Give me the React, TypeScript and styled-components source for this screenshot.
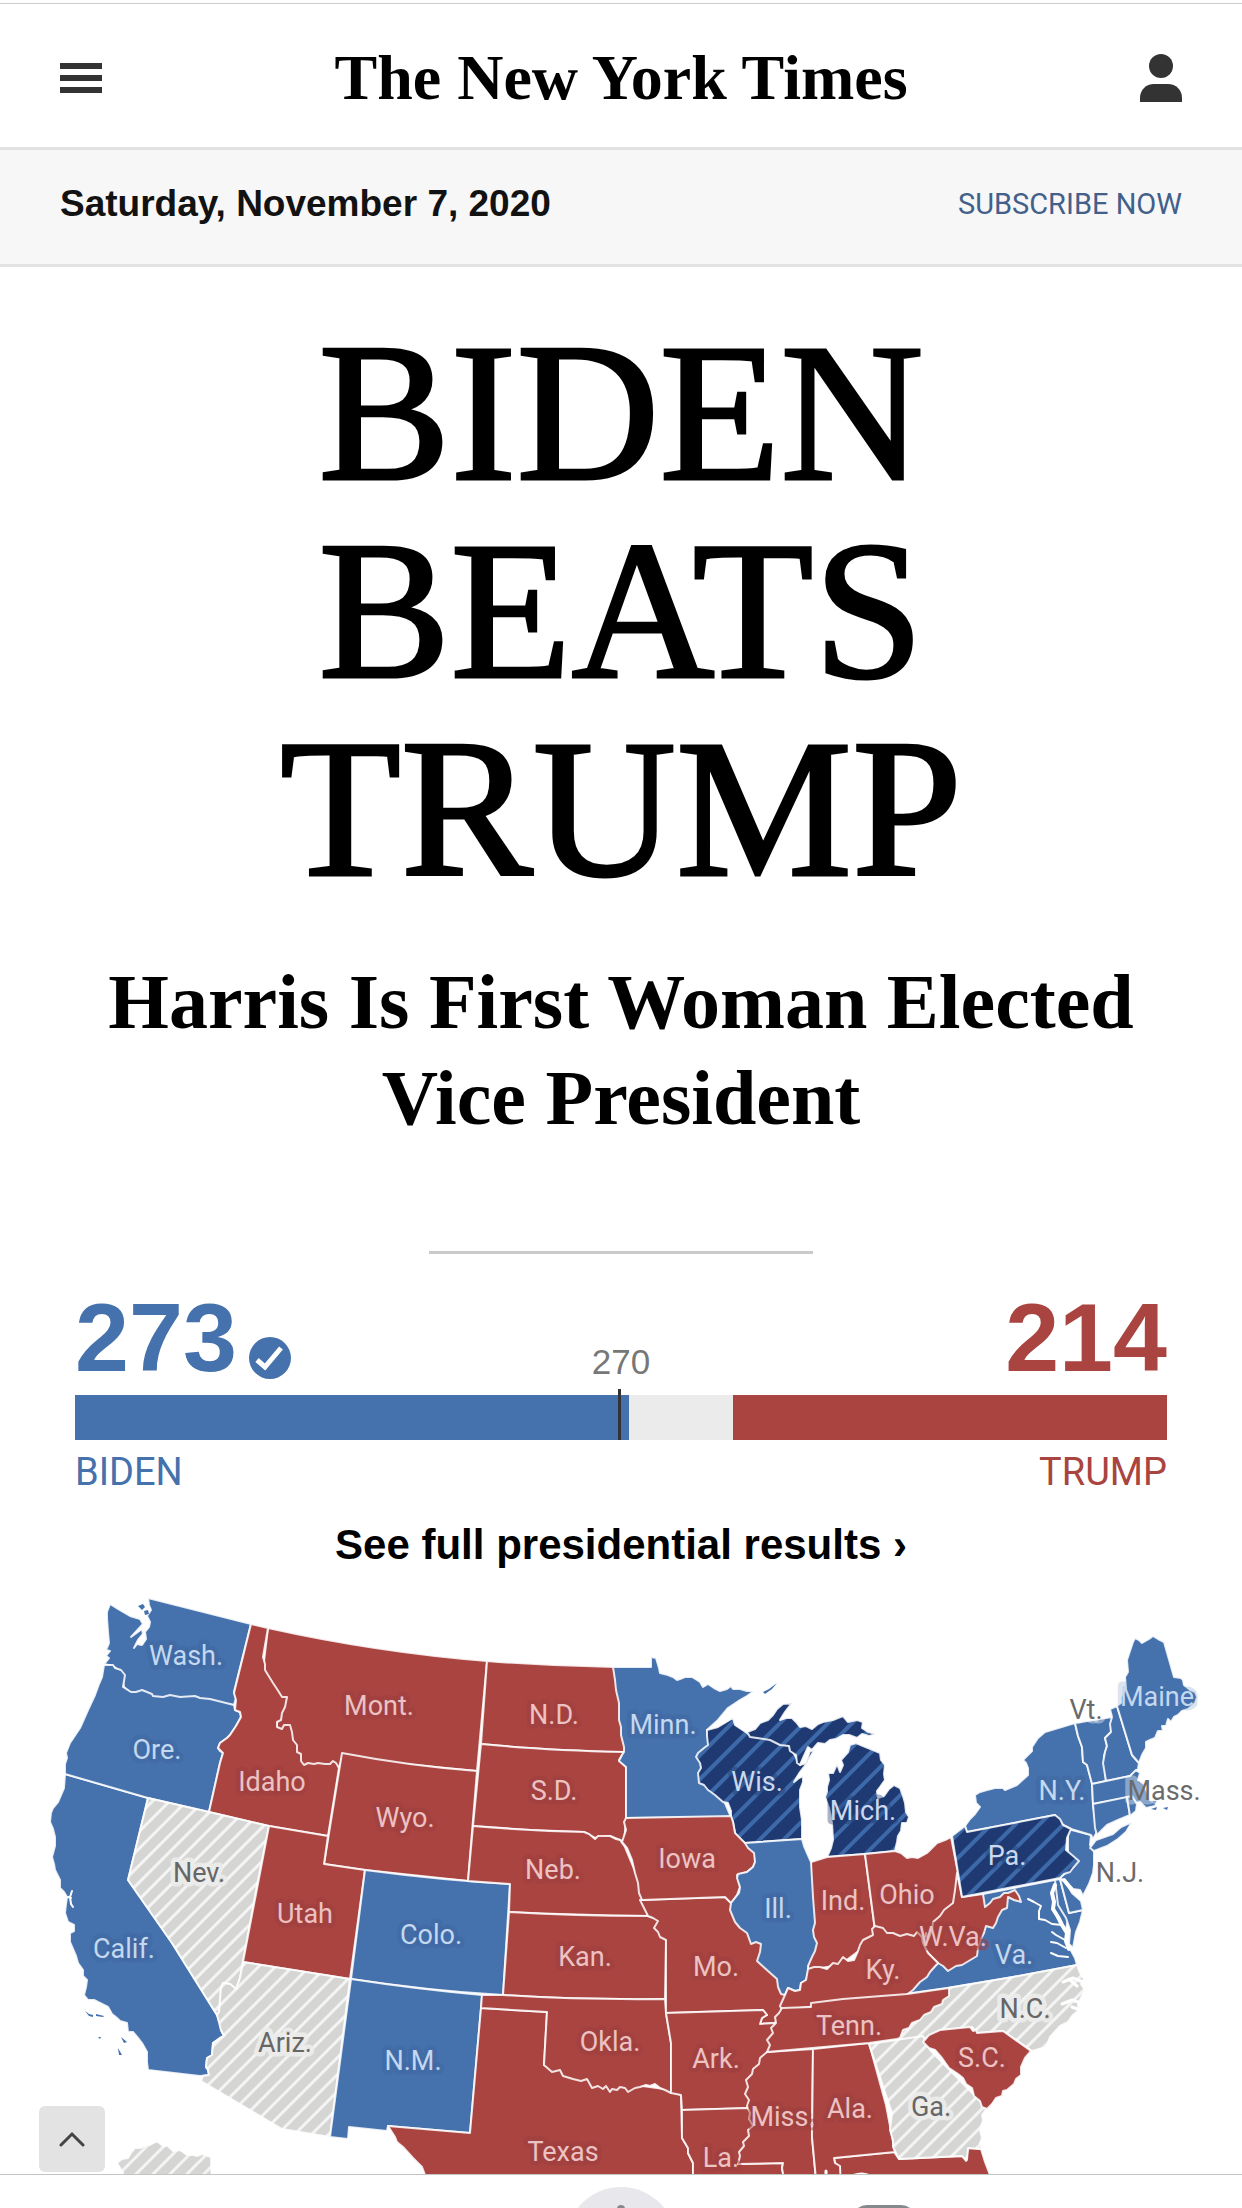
import React from 'react';
import styled, { createGlobalStyle, css } from 'styled-components';

const COLORS = {
  blue: '#4571ad',
  red: '#a94441',
  navy: '#1f3a72',
  grey: '#d5d5d3',
};

const SANS = '"Liberation Sans", Arial, sans-serif';
const SANS_LIGHT = 'Roboto, "Liberation Sans", sans-serif';
const SERIF = '"Liberation Serif", "Times New Roman", serif';

const GlobalStyle = createGlobalStyle`
  * {
    box-sizing: border-box;
  }

  body {
    margin: 0;
    background-color: #ffffff;
    color: #000000;
    font-family: ${SANS};
  }
`;

const Page = styled.div`
  position: relative;
  display: flex;
  flex-direction: column;
  height: 100vh;
  overflow: hidden;
`;

const TopEdge = styled.div`
  flex: none;
  height: 4px;
  border-bottom: 1px solid #cccccc;
`;

const Header = styled.header`
  flex: none;
  display: flex;
  align-items: center;
  justify-content: space-between;
  height: 146px;
  padding: 5px 60px 0;
  border-bottom: 3px solid #e2e2e2;
`;

const IconButton = styled.button`
  display: flex;
  padding: 0;
  border: none;
  background: none;
  color: #333333;
  cursor: pointer;
`;

const Masthead = styled.a`
  font-family: ${SERIF};
  font-size: 64px;
  font-weight: 700;
  line-height: 72px;
  color: #000000;
  text-decoration: none;
  white-space: nowrap;
`;

const DateBar = styled.div`
  flex: none;
  display: flex;
  align-items: center;
  justify-content: space-between;
  height: 117px;
  padding: 0 60px 6px;
  background-color: #f7f7f7;
  border-bottom: 3px solid #e2e2e2;
`;

const Today = styled.time`
  font-size: 37px;
  font-weight: 700;
  line-height: 44px;
  color: #121212;
`;

const SubscribeLink = styled.a`
  font-family: ${SANS_LIGHT};
  font-size: 29px;
  line-height: 36px;
  color: #42608a;
  text-decoration: none;
`;

const Story = styled.section`
  flex: none;
  display: flex;
  flex-direction: column;
  align-items: center;
  padding: 47px 60px 0;
  text-align: center;
  font-family: ${SERIF};
`;

const Headline = styled.h1`
  max-width: 900px;
  margin: 0;
  font-size: 198px;
  font-weight: 400;
  line-height: 198px;
  -webkit-text-stroke: 3px #000000;
`;

const Subhead = styled.h2`
  max-width: 1100px;
  margin: 46px 0 0;
  font-size: 78px;
  font-weight: 700;
  line-height: 96px;
`;

const Rule = styled.hr`
  width: 384px;
  height: 3px;
  margin: 105px 0 0;
  border: none;
  background-color: #cacaca;
`;

const Results = styled.section`
  flex: none;
  padding: 37px 75px 0;
`;

const Totals = styled.div`
  display: grid;
  grid-template-columns: 1fr auto 1fr;
  align-items: end;
`;

const Votes = styled.div<{ $color: string; $end?: boolean }>`
  display: flex;
  align-items: flex-end;
  justify-content: ${({ $end }) => ($end ? 'flex-end' : 'flex-start')};
  gap: 12px;
  font-size: 97px;
  font-weight: 700;
  line-height: 94px;
  color: ${({ $color }) => $color};

  svg {
    margin-bottom: 6px;
  }
`;

const Threshold = styled.div`
  padding-bottom: 3px;
  font-size: 35px;
  line-height: 40px;
  color: #777777;
`;

const Bar = styled.div`
  position: relative;
  display: flex;
  justify-content: space-between;
  height: 45px;
  margin-top: 10px;
  background-color: #ebebeb;

  &::after {
    content: '';
    position: absolute;
    top: -6px;
    bottom: 0;
    left: calc(50% - 3px);
    width: 3px;
    background-color: #333333;
  }
`;

const BarFill = styled.div<{ $color: string }>`
  background-color: ${({ $color }) => $color};
`;

const Names = styled.div`
  display: flex;
  justify-content: space-between;
  margin-top: 10px;
  font-family: ${SANS_LIGHT};
  font-size: 38px;
  line-height: 44px;
`;

const Name = styled.span<{ $color: string }>`
  color: ${({ $color }) => $color};
`;

const ResultsLink = styled.a`
  display: block;
  margin-top: 27px;
  font-size: 42px;
  font-weight: 700;
  line-height: 48px;
  text-align: center;
  color: #000000;
  text-decoration: none;
`;

const MapArea = styled.div`
  flex: 1;
  min-height: 0;
  margin-top: 11px;
  overflow: hidden;

  svg {
    display: block;
    width: 100%;
  }
`;

const StateShape = styled.path`
  stroke: #ffffff;
  stroke-opacity: 0.85;
  stroke-width: 2;
  stroke-linejoin: round;
`;

const labelTones = {
  blue: css`
    fill: #c4d8f0;
    stroke: #3f67a0;
    stroke-opacity: 0.5;
  `,
  coast: css`
    fill: #c4d8f0;
    stroke: #4571ad;
    stroke-opacity: 0.2;
  `,
  red: css`
    fill: #edc2c3;
    stroke: #9c3f3d;
    stroke-opacity: 0.5;
  `,
  navy: css`
    fill: #cbd9ee;
    stroke: #1f3a72;
    stroke-opacity: 0.4;
  `,
  grey: css`
    fill: #666666;
    stroke: #ededed;
    stroke-opacity: 0.9;
  `,
  outside: css`
    fill: #6b6b6b;
    stroke: #ffffff;
    stroke-opacity: 0.4;
  `,
};

type LabelTone = keyof typeof labelTones;

const StateLabel = styled.text<{ $tone: LabelTone }>`
  font-family: ${SANS_LIGHT};
  font-size: 27px;
  text-anchor: middle;
  paint-order: stroke;
  stroke-width: 9;
  stroke-linejoin: round;
  ${({ $tone }) => labelTones[$tone]}
`;

const BackToTop = styled.button`
  position: absolute;
  left: 39px;
  bottom: 36px;
  display: flex;
  align-items: center;
  justify-content: center;
  width: 66px;
  height: 66px;
  padding: 0;
  border: none;
  border-radius: 6px;
  background-color: #e3e3e3;
  cursor: pointer;
`;

const TabBar = styled.nav`
  flex: none;
  display: flex;
  justify-content: space-between;
  height: 34px;
  padding: 12px 40px 0;
  border-top: 1px solid #c4c4c4;
  background-color: #ffffff;
  overflow: hidden;
`;

const TabButton = styled.button<{ $active?: boolean }>`
  display: flex;
  justify-content: center;
  width: 110px;
  height: 110px;
  padding: 18px 0 0;
  border: none;
  border-radius: 50%;
  background-color: ${({ $active }) => ($active ? '#e8e8ec' : 'transparent')};
  color: #85898c;
`;

type Fill = 'blue' | 'red' | 'navyHatch' | 'greyHatch';

const FILLS: Record<Fill, string> = {
  blue: COLORS.blue,
  red: COLORS.red,
  navyHatch: 'url(#navy-hatch)',
  greyHatch: 'url(#grey-hatch)',
};

// Drawn in order: a state with a detailed border comes after the neighbour it lies over.
const states: { id: string; fill: Fill; d: string }[] = [
  {
    id: 'AK',
    fill: 'greyHatch',
    d: 'M117 2163 122 2159 128 2158 131 2153 135 2148 140 2148 147 2145 150 2145 157 2141 163 2146 168 2146 173 2151 180 2150 187 2155 193 2155 197 2156 202 2154 211 2157 212 2190 128 2190 123 2173Z',
  },
  {
    id: 'CA',
    fill: 'blue',
    d: 'M65 1774 64 1788 61 1795 58 1802 53 1808 51 1813 50 1822 53 1829 55 1837 55 1846 52 1857 54 1864 55 1870 60 1880 60 1888 64 1892 67 1897 66 1904 65 1913 68 1922 74 1925 74 1931 70 1933 70 1942 73 1949 76 1956 78 1963 83 1970 83 1976 87 1980 86 1987 84 1995 88 2000 94 2000 100 2003 108 2007 112 2014 117 2018 120 2021 127 2023 128 2032 133 2032 138 2038 142 2043 147 2052 147 2062 148 2070 200 2076 209 2075 208 2070 206 2067 207 2058 212 2055 213 2043 220 2038 224 2036 221 2030 220 2023 217 2015 172 1943 128 1880 148 1798Z',
  },
  {
    id: 'WA',
    fill: 'blue',
    d: 'M110 1604 107 1612 107 1618 108 1632 109 1643 106 1650 110 1651 106 1656 109 1658 104 1664 113 1666 121 1672 124 1687 131 1693 152 1697 234 1705 236 1698 234 1692 251 1624 148 1598 149 1605 151 1610 147 1616 150 1622 149 1627 145 1632 146 1639 142 1645 137 1644 134 1648 138 1640 143 1634 142 1629 131 1637 143 1624 140 1619 130 1616 118 1609Z',
  },
  {
    id: 'OR',
    fill: 'blue',
    d: 'M104 1665 113 1665 115 1668 121 1670 125 1675 123 1687 131 1692 136 1692 142 1690 152 1694 153 1696 163 1697 170 1695 180 1697 195 1696 200 1698 210 1699 234 1705 235 1710 240 1712 241 1717 236 1726 230 1735 227 1738 220 1743 218 1748 220 1751 223 1753 220 1763 209 1812 148 1798 65 1774 65 1764 67 1758 66 1753 70 1743 80 1728 88 1710 95 1695 99 1684 102 1677Z',
  },
  {
    id: 'MT',
    fill: 'red',
    d: 'M268 1628Q376 1652 487 1661L477 1771 342 1758 338 1770 300 1768 276 1727 282 1700 263 1670Z',
  },
  {
    id: 'ID',
    fill: 'red',
    d: 'M251 1624 268 1628 263 1657 265 1664 265 1670 273 1683 277 1689 282 1697 287 1697 285 1707 282 1713 281 1720 277 1722 277 1727 282 1729 284 1725 290 1725 292 1732 293 1740 297 1745 297 1752 301 1754 301 1761 304 1765 308 1763 314 1764 318 1763 325 1764 330 1764 333 1761 336 1763 339 1768 328 1836 269 1826 209 1812 220 1763 223 1753 218 1748 220 1743 227 1738 230 1735 236 1726 241 1717 240 1712 235 1710 236 1700 234 1693Z',
  },
  { id: 'WY', fill: 'red', d: 'M342 1753Q410 1766 477 1771L468 1881 365 1870 324 1864Z' },
  {
    id: 'NV',
    fill: 'greyHatch',
    d: 'M148 1798 209 1812 269 1826 258 1880 243 1962 240 1978 236 1989 230 1984 223 1983 221 1988 220 2000 219 2012 217 2015 172 1943 128 1880Z',
  },
  { id: 'UT', fill: 'red', d: 'M269 1826 328 1836 324 1864 365 1870 350 1979 243 1962Z' },
  { id: 'CO', fill: 'blue', d: 'M365 1870Q440 1880 510 1884L503 1995Q430 1991 351 1979Z' },
  {
    id: 'AZ',
    fill: 'greyHatch',
    d: 'M243 1962 350 1979 330 2137 282 2129 201 2081 203 2076 209 2075 208 2070 206 2067 207 2058 212 2055 213 2043 220 2038 224 2036 221 2030 217 2015 219 2012 220 2000 221 1988 223 1983 230 1984 236 1989 240 1978Z',
  },
  {
    id: 'NM',
    fill: 'blue',
    d: 'M351 1979Q416 1989 482 1995L481 2008 470 2133 388 2126 387 2131 349 2127 348 2139 330 2137Z',
  },
  { id: 'ND', fill: 'red', d: 'M487 1661Q550 1666 615 1667L628 1752 624 1752Q540 1750 481 1744Z' },
  {
    id: 'SD',
    fill: 'red',
    d: 'M481 1744Q540 1750 624 1752L619 1760 626 1767 626 1820 624 1842 620 1840 610 1836 595 1838 584 1832 530 1830 473 1826Z',
  },
  {
    id: 'NE',
    fill: 'red',
    d: 'M473 1826Q530 1831 584 1832L589 1834 595 1839 598 1836 610 1836 616 1839 620 1840 625 1847 645 1895 648 1916Q575 1915 509 1912L510 1884 468 1881Z',
  },
  {
    id: 'KS',
    fill: 'red',
    d: 'M509 1912Q575 1916 648 1916L662 1920 666 1940 665 1999Q580 2000 503 1995Z',
  },
  {
    id: 'TX',
    fill: 'red',
    d: 'M481 2008 547 2012 544 2065 600 2080 671 2090 681 2095 682 2138 688 2148 688 2153 693 2163 693 2190 430 2190 425 2175 422 2167 413 2158 403 2147 397 2142 395 2137 388 2126 470 2133Z',
  },
  {
    id: 'OK',
    fill: 'red',
    d: 'M482 1995 503 1995Q580 2000 665 1999L666 2013 671 2043 671 2093 665 2090 660 2088 655 2084 650 2086 646 2085 640 2087 635 2088 628 2092 625 2088 620 2087 617 2090 612 2089 610 2092 606 2086 603 2089 598 2086 592 2088 587 2079 581 2081 573 2079 563 2076 560 2070 552 2072 544 2065 547 2012 481 2008Z',
  },
  {
    id: 'MN',
    fill: 'blue',
    d: 'M613 1667 651 1667 651 1657 656 1658 659 1668 660 1673 668 1675 673 1677 677 1680 680 1679 685 1677 692 1677 697 1680 700 1682 703 1687 708 1684 714 1688 720 1691 727 1689 731 1686 733 1689 740 1689 747 1691 754 1691 747 1696 740 1700 728 1708 718 1720 707 1730 715 1780 731 1817 626 1818 626 1767 619 1761 622 1755 624 1752 624 1747 621 1735 621 1727 619 1720 619 1703 616 1690 615 1680Z',
  },
  {
    id: 'WI',
    fill: 'navyHatch',
    d: 'M707 1730 718 1727 733 1718 735 1725 747 1733 770 1738 790 1746 800 1765 806 1763 810 1751 814 1750 807 1763 800 1772 794 1782 799 1778 803 1776 803 1782 800 1790 800 1807 802 1820 802 1839 745 1843 739 1839 735 1833 733 1822 731 1817 731 1811 728 1803 723 1802 715 1795 708 1790 704 1785 699 1783 698 1773 701 1768 700 1763 696 1757 698 1753 704 1748 708 1745 707 1736Z',
  },
  {
    id: 'MI-UP',
    fill: 'navyHatch',
    d: 'M747 1732 755 1729 760 1723 768 1720 773 1715 777 1709 783 1704 792 1703 788 1708 785 1712 780 1720 786 1718 792 1718 796 1722 800 1727 806 1726 812 1729 818 1724 823 1722 833 1720 843 1716 848 1722 857 1720 863 1722 862 1728 868 1732 876 1734 869 1736 862 1734 857 1738 849 1735 843 1735 836 1739 830 1740 825 1744 818 1743 812 1750 808 1747 803 1758 800 1765 797 1763 796 1755 790 1751 789 1746 780 1745 770 1740 757 1738 750 1737Z',
  },
  {
    id: 'MI',
    fill: 'navyHatch',
    d: 'M848 1752 850 1745 856 1743 863 1746 873 1750 880 1753 881 1760 885 1765 884 1774 885 1780 880 1787 877 1791 878 1798 884 1796 889 1789 894 1785 900 1788 903 1796 905 1803 906 1812 909 1817 907 1823 902 1823 901 1831 898 1836 897 1842 895 1851 865 1854 827 1857 831 1848 833 1840 832 1823 829 1808 825 1797 827 1792 827 1787 829 1780 828 1773 833 1773 837 1764 840 1772 843 1765 841 1760Z',
  },
  {
    id: 'MO',
    fill: 'red',
    d: 'M640 1900 725 1897 731 1903 760 1940 790 1995 785 2008 775 2023 760 2024 762 2018 767 2015 763 2010 666 2013 666 1940 660 1937 658 1932 654 1928 658 1921 653 1918 648 1916Z',
  },
  {
    id: 'IA',
    fill: 'red',
    d: 'M626 1818 731 1816 733 1822 735 1833 745 1843 751 1848 755 1853 755 1862 753 1867 747 1872 737 1875 740 1887 737 1895 731 1903 725 1897 642 1900 639 1893 638 1883 635 1873 632 1860 627 1848 622 1842 626 1830 624 1822Z',
  },
  {
    id: 'IN',
    fill: 'red',
    d: 'M811 1862 827 1857 865 1854 875 1930 873 1937 860 1950 840 1965 808 1970Z',
  },
  {
    id: 'IL',
    fill: 'blue',
    d: 'M745 1843 802 1839 804 1846 807 1853 811 1862 813 1897 815 1923 813 1930 814 1937 817 1943 815 1951 812 1957 808 1966 808 1973 806 1980 801 1983 800 1990 795 1991 788 1988 785 1995 781 1994 778 1987 777 1979 768 1971 757 1961 760 1952 761 1944 756 1942 751 1944 747 1933 740 1928 735 1922 730 1910 731 1903 735 1898 739 1893 740 1887 737 1878 738 1874 747 1872 753 1867 755 1862 754 1853 748 1848Z',
  },
  {
    id: 'OH',
    fill: 'red',
    d: 'M865 1854 895 1851 901 1853 907 1858 912 1857 918 1858 927 1853 937 1843 945 1840 951 1837 958 1873 955 1900 930 1942 900 1940 875 1930Z',
  },
  {
    id: 'VA',
    fill: 'blue',
    d: 'M938 1963 983 1894 1060 1879 1069 1913 1066 1930 1068 1945 1075 1958 1077 1965 1013 1977 947 1988 905 1994Z',
  },
  {
    id: 'WV',
    fill: 'red',
    d: 'M957 1873 962 1897 983 1894 985 1907 990 1903 993 1899 1000 1897 1004 1893 1008 1893 1015 1890 1019 1896 1021 1902 1014 1900 1008 1897 1007 1908 1002 1910 998 1917 996 1923 993 1928 986 1926 984 1933 981 1939 978 1948 977 1956 972 1959 962 1965 956 1966 948 1971 943 1966 938 1963 928 1953 924 1948 923 1943 926 1933 928 1940 932 1930 933 1922 940 1916 944 1910 953 1903 955 1890Z',
  },
  {
    id: 'KY',
    fill: 'red',
    d: 'M808 1969 814 1967 820 1967 827 1969 833 1963 838 1964 843 1957 848 1961 854 1960 858 1951 860 1945 863 1940 873 1935 872 1929 875 1926 883 1928 887 1933 893 1933 900 1936 907 1934 914 1936 917 1932 922 1937 923 1943 928 1953 938 1963 930 1972 927 1977 920 1982 913 1990 905 1996 782 2010 780 2006 785 1995 788 1988 795 1991 800 1990 801 1983 806 1980Z',
  },
  {
    id: 'AR',
    fill: 'red',
    d: 'M666 2013 763 2010 767 2015 762 2018 760 2024 775 2023 790 2035 765 2060 755 2108 682 2110 681 2095 671 2093 671 2043Z',
  },
  {
    id: 'LA',
    fill: 'red',
    d: 'M682 2110 748 2108 770 2120 738 2164 783 2163 782 2168 786 2190 693 2190 693 2163 688 2153 688 2148 682 2138Z',
  },
  {
    id: 'MS',
    fill: 'red',
    d: 'M767 2052 813 2049 812 2137 817 2190 786 2190 782 2168 783 2163 738 2164 740 2156 739 2152 744 2146 743 2142 749 2136 748 2130 753 2126 749 2119 750 2113 747 2106 749 2100 745 2094 748 2087 746 2080 752 2074 753 2069 759 2064 760 2058Z',
  },
  {
    id: 'FL',
    fill: 'red',
    d: 'M834 2158 894 2152 899 2159 962 2156 966 2161 968 2148 981 2149 985 2162 990 2175 992 2190 840 2190 840 2175 840 2167 835 2163Z',
  },
  {
    id: 'AL',
    fill: 'red',
    d: 'M813 2049 869 2043 886 2105 895 2152 834 2158 835 2163 840 2166 841 2190 817 2190 812 2137Z',
  },
  {
    id: 'NC',
    fill: 'greyHatch',
    d: 'M948 1988 1013 1977 1077 1965 1080 1973 1084 1979 1081 1984 1085 1990 1081 1998 1078 2005 1079 2010 1072 2016 1068 2022 1060 2026 1050 2037 1046 2047 1032 2051 1003 2031 977 2033 972 2027 940 2030 923 2040 897 2039 898 2030 908 2020 930 2005Z',
  },
  {
    id: 'GA',
    fill: 'greyHatch',
    d: 'M869 2044 923 2036 930 2050 987 2108 982 2115 983 2120 980 2130 982 2138 980 2143 982 2149 968 2148 967 2160 962 2156 899 2159 893 2147 893 2140 890 2130 892 2113Z',
  },
  {
    id: 'TN',
    fill: 'red',
    d: 'M782 2008 811 2007 811 2003 843 1999 907 1994 949 1988 949 1996 943 2000 942 2004 934 2007 931 2012 924 2015 920 2020 912 2023 909 2028 903 2030 900 2038 897 2039 869 2043 767 2052 770 2045 767 2040 773 2033 771 2028 776 2023 775 2017 779 2013Z',
  },
  {
    id: 'SC',
    fill: 'red',
    d: 'M923 2042 929 2035 940 2030 970 2027 973 2031 976 2030 977 2033 1003 2031 1031 2051 1025 2058 1021 2067 1021 2075 1016 2079 1014 2084 1007 2090 1003 2091 1002 2096 996 2098 992 2104 987 2109 982 2107 980 2101 974 2096 972 2088 966 2084 963 2078 958 2074 949 2068 942 2058 935 2050 929 2048Z',
  },
  {
    id: 'DELMARVA',
    fill: 'blue',
    d: 'M1055 1880 1060 1879 1069 1913 1083 1910 1080 1922 1076 1932 1073 1948 1069 1944 1070 1930 1066 1918 1058 1905Z',
  },
  { id: 'DE', fill: 'blue', d: 'M1060 1879 1066 1882 1072 1893 1081 1901 1083 1910 1069 1913Z' },
  {
    id: 'NJ',
    fill: 'blue',
    d: 'M1068 1829 1091 1835 1090 1845 1094 1852 1094 1865 1093 1873 1089 1884 1083 1896 1080 1890 1073 1889 1067 1883 1060 1878 1068 1870Z',
  },
  {
    id: 'NY',
    fill: 'blue',
    d: 'M965 1826 970 1819 975 1814 980 1807 976 1803 975 1795 980 1792 987 1790 995 1788 1003 1788 1005 1790 1017 1785 1028 1775 1028 1768 1026 1763 1023 1760 1032 1751 1032 1747 1038 1738 1045 1732 1075 1723 1078 1736 1082 1747 1083 1762 1087 1765 1092 1783 1093 1805 1097 1832 1093 1839 1091 1835 1071 1829 1063 1825 1055 1815 967 1832Z',
  },
  {
    id: 'PA',
    fill: 'navyHatch',
    d: 'M952 1836 965 1826 967 1832 1055 1815 1060 1819 1063 1825 1071 1829 1067 1838 1066 1850 1072 1855 1079 1861 1073 1868 1070 1872 1064 1874 1060 1878 962 1897Z',
  },
  {
    id: 'LI',
    fill: 'blue',
    d: 'M1090 1848 1096 1840 1113 1834 1121 1827 1132 1822 1126 1832 1118 1839 1107 1846 1094 1851Z',
  },
  {
    id: 'VT',
    fill: 'blue',
    d: 'M1075 1723 1112 1717 1111 1732 1105 1738 1107 1746 1104 1756 1106 1781 1092 1784 1087 1765 1083 1762 1082 1747 1078 1736Z',
  },
  {
    id: 'NH',
    fill: 'blue',
    d: 'M1112 1717 1110 1709 1117 1706 1132 1755 1139 1763 1138 1769 1130 1776 1106 1781 1103 1763 1105 1752 1107 1746 1105 1738 1111 1732 1110 1724Z',
  },
  {
    id: 'ME',
    fill: 'blue',
    d: 'M1117 1706 1121 1703 1121 1697 1126 1688 1125 1677 1128 1672 1127 1660 1133 1642 1135 1638 1139 1640 1142 1643 1149 1639 1153 1636 1158 1639 1164 1642 1174 1677 1181 1678 1183 1680 1184 1685 1190 1690 1195 1692 1197 1697 1195 1703 1188 1709 1182 1711 1178 1715 1174 1717 1171 1722 1168 1719 1166 1726 1162 1726 1163 1731 1158 1731 1155 1738 1150 1740 1146 1742 1146 1748 1142 1755 1139 1763 1132 1755Z',
  },
  {
    id: 'MA',
    fill: 'blue',
    d: 'M1092 1784 1130 1776 1136 1770 1140 1773 1138 1780 1144 1784 1147 1792 1150 1800 1158 1800 1155 1806 1146 1808 1140 1802 1136 1803 1131 1797 1093 1804Z',
  },
  { id: 'CT', fill: 'blue', d: 'M1093 1804 1127 1797 1130 1815 1118 1820 1107 1825 1097 1835 1095 1828Z' },
  { id: 'RI', fill: 'blue', d: 'M1127 1797 1132 1796 1137 1804 1136 1811 1130 1816Z' },
];

const islands =
  'M138 1606l5 -2 2 3 -3 3zM144 1611l4 -1 1 4 -4 1zM763 1692l6 -3 8 -6 -5 6 -7 5zM85 2011l4 3 4 1 0 2 -4 -1zM96 2014l8 2 -1 1 -7 -1zM98 2037l3 0 -1 2zM121 2037l6 5 -3 1zM118 2048l4 7 -3 0zM1151 1809l6 -2 -1 3zM1163 1808l5 -1 -1 3z';

const labels: [text: string, x: number, y: number, tone: LabelTone][] = [
  ['Wash.', 186, 1665, 'blue'],
  ['Ore.', 157, 1759, 'blue'],
  ['Idaho', 272, 1791, 'red'],
  ['Nev.', 199, 1882, 'grey'],
  ['Mont.', 379, 1715, 'red'],
  ['N.D.', 554, 1724, 'red'],
  ['S.D.', 554, 1800, 'red'],
  ['Wyo.', 405, 1827, 'red'],
  ['Neb.', 553, 1879, 'red'],
  ['Colo.', 431, 1944, 'blue'],
  ['Utah', 305, 1923, 'red'],
  ['Calif.', 124, 1958, 'blue'],
  ['Ariz.', 285, 2052, 'grey'],
  ['N.M.', 413, 2070, 'blue'],
  ['Kan.', 585, 1966, 'red'],
  ['Okla.', 610, 2051, 'red'],
  ['Texas', 563, 2161, 'red'],
  ['Minn.', 663, 1734, 'blue'],
  ['Iowa', 687, 1868, 'red'],
  ['Mo.', 716, 1976, 'red'],
  ['Ark.', 716, 2068, 'red'],
  ['La.', 721, 2167, 'red'],
  ['Wis.', 757, 1791, 'navy'],
  ['Mich.', 863, 1820, 'navy'],
  ['Ill.', 778, 1918, 'blue'],
  ['Ind.', 843, 1910, 'red'],
  ['Ohio', 907, 1904, 'red'],
  ['Ky.', 883, 1979, 'red'],
  ['Tenn.', 849, 2035, 'red'],
  ['Miss.', 783, 2126, 'red'],
  ['Ala.', 850, 2118, 'red'],
  ['Ga.', 931, 2116, 'grey'],
  ['S.C.', 982, 2067, 'red'],
  ['N.C.', 1025, 2018, 'grey'],
  ['Va.', 1014, 1964, 'blue'],
  ['W.Va.', 953, 1946, 'red'],
  ['Pa.', 1007, 1865, 'navy'],
  ['N.Y.', 1062, 1800, 'blue'],
  ['N.J.', 1120, 1882, 'outside'],
  ['Vt.', 1086, 1719, 'outside'],
  ['Mass.', 1164, 1800, 'outside'],
  ['Maine', 1157, 1706, 'coast'],
];

const ElectoralMap: React.FC = () => (
  <svg viewBox="0 1580 1242 610" role="img" aria-label="Presidential results by state">
    <defs>
      <pattern id="grey-hatch" width="12" height="12" patternUnits="userSpaceOnUse" patternTransform="rotate(45)">
        <rect width="12" height="12" fill={COLORS.grey} />
        <rect width="3" height="12" fill="#f4f4f4" />
      </pattern>
      <pattern id="navy-hatch" width="17" height="17" patternUnits="userSpaceOnUse" patternTransform="rotate(45)">
        <rect width="17" height="17" fill={COLORS.navy} />
        <rect width="4" height="17" fill="#3d69a8" />
      </pattern>
    </defs>
    {states.map(({ id, fill, d }) => (
      <StateShape key={id} d={d} fill={FILLS[fill]} />
    ))}
    <path d={islands} fill={COLORS.blue} />
    {/* San Francisco, Chesapeake, Pamlico and Mobile bays */}
    <g fill="none" stroke="#ffffff" strokeLinecap="round" strokeLinejoin="round">
      <path d="M72 1891l-2 6 1 7 2 3M68 1897l3 1" strokeWidth="2" />
      <path d="M1055 1885l-3 8 2 9 -1 7 5 8 4 8 5 8 -1 8 3 8" strokeWidth="4" />
      <path d="M1062 1925l-10 -1 -7 -4 -6 -1 0 -8 2 -5 -7 -4 -6 -3M1065 1940l-9 -5 -4 -3M1066 1948l-9 -5 -6 -1M1068 1957l-10 -1 -7 -3" strokeWidth="2" />
      <path d="M1064 1880l8 10 9 7" strokeWidth="4" />
      <path d="M1083 1982l-10 -4 -10 4M1077 1986l-8 -7M1084 2004l-12 -4 -10 4M1080 2010l-8 -3" strokeWidth="3" />
      <path d="M826 2171v12M852 2176q10 -4 18 0" strokeWidth="3" />
    </g>
    {labels.map(([text, x, y, tone]) => (
      <StateLabel key={text} x={x} y={y} $tone={tone}>
        {text}
      </StateLabel>
    ))}
  </svg>
);

const ELECTORS = 538;
const results = { biden: 273, trump: 214 };

const share = (votes: number) => `${(votes / ELECTORS) * 100}%`;

const App: React.FC = () => (
  <>
    <GlobalStyle />
    <Page>
      <TopEdge />
      <Header>
        <IconButton aria-label="Sections">
          <svg width="42" height="30" viewBox="0 0 42 30" fill="currentColor">
            <path d="M0 0h42v6H0zM0 12h42v6H0zM0 24h42v6H0z" />
          </svg>
        </IconButton>
        <Masthead href="#">The New York Times</Masthead>
        <IconButton aria-label="Account">
          <svg width="42" height="48" viewBox="0 0 42 48" fill="currentColor">
            <circle cx="21" cy="12" r="12" />
            <path d="M0 48v-4c0-8 6-14 14-14h14c8 0 14 6 14 14v4z" />
          </svg>
        </IconButton>
      </Header>
      <DateBar>
        <Today dateTime="2020-11-07">Saturday, November 7, 2020</Today>
        <SubscribeLink href="#">SUBSCRIBE NOW</SubscribeLink>
      </DateBar>
      <Story>
        <Headline>
          BIDEN
          <br />
          BEATS
          <br />
          TRUMP
        </Headline>
        <Subhead>Harris Is First Woman Elected Vice President</Subhead>
        <Rule />
      </Story>
      <Results>
        <Totals>
          <Votes $color={COLORS.blue}>
            {results.biden}
            <svg width="42" height="42" viewBox="0 0 42 42" aria-label="Winner">
              <circle cx="21" cy="21" r="21" fill={COLORS.blue} />
              <path d="M8 23l8 7L32 11" fill="none" stroke="#ffffff" strokeWidth="5" />
            </svg>
          </Votes>
          <Threshold>270</Threshold>
          <Votes $color={COLORS.red} $end>
            {results.trump}
          </Votes>
        </Totals>
        <Bar>
          <BarFill $color={COLORS.blue} style={{ width: share(results.biden) }} />
          <BarFill $color={COLORS.red} style={{ width: share(results.trump) }} />
        </Bar>
        <Names>
          <Name $color={COLORS.blue}>BIDEN</Name>
          <Name $color={COLORS.red}>TRUMP</Name>
        </Names>
        <ResultsLink href="#">See full presidential results ›</ResultsLink>
      </Results>
      <MapArea>
        <ElectoralMap />
      </MapArea>
      <TabBar>
        <TabButton aria-label="Back" />
        <TabButton aria-label="Forward" />
        <TabButton aria-label="New tab" $active>
          <svg width="8" height="50" viewBox="0 0 8 50" fill="currentColor">
            <rect width="8" height="50" rx="4" />
          </svg>
        </TabButton>
        <TabButton aria-label="Tabs">
          <svg width="64" height="60" viewBox="0 0 64 60" fill="none" stroke="currentColor">
            <rect x="3" y="3" width="58" height="54" rx="12" strokeWidth="6" />
          </svg>
        </TabButton>
        <TabButton aria-label="More" />
      </TabBar>
      <BackToTop aria-label="Back to top">
        <svg width="26" height="16" viewBox="0 0 26 16" fill="none" stroke="#444444" strokeWidth="3">
          <path d="M2 14L13 3l11 11" strokeLinecap="round" />
        </svg>
      </BackToTop>
    </Page>
  </>
);

export default App;
